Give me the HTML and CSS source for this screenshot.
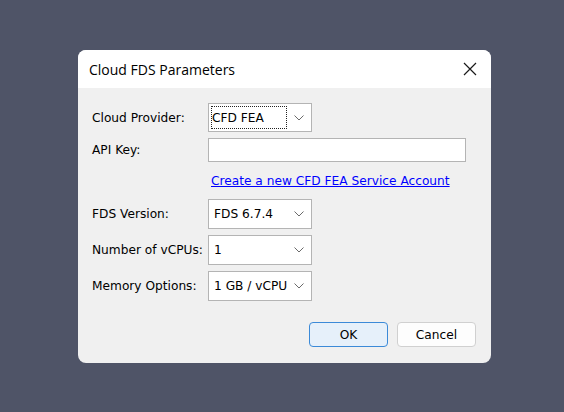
FILE: index.html
```html
<!DOCTYPE html>
<html>
<head>
<meta charset="utf-8">
<link rel="stylesheet" href="styles.css">
</head>
<body>
<div class="dialog">
  <div class="titlebar">
    <span class="title">Cloud FDS Parameters</span>
    <span class="close">
      <svg width="14" height="14" viewBox="0 0 14 14"><path d="M1 1 L13 13 M13 1 L1 13" stroke="#1a1a1a" stroke-width="1.2" fill="none"/></svg>
    </span>
  </div>
  <div class="content">
    <div class="form">
      <label class="lbl">Cloud Provider:</label>
      <div class="combo"><span class="val focus">CFD FEA</span><span class="chev"><svg width="10" height="6" viewBox="0 0 10 6"><path d="M0.5 0.5 L5 5 L9.5 0.5" stroke="#6a6a6a" stroke-width="1" fill="none"/></svg></span></div>
      <label class="lbl">API Key:</label>
      <div class="input"></div>
      <span></span>
      <div class="linkrow"><a class="link" href="#">Create a new CFD FEA Service Account</a></div>
      <label class="lbl">FDS Version:</label>
      <div class="combo"><span class="val">FDS 6.7.4</span><span class="chev"><svg width="10" height="6" viewBox="0 0 10 6"><path d="M0.5 0.5 L5 5 L9.5 0.5" stroke="#6a6a6a" stroke-width="1" fill="none"/></svg></span></div>
      <label class="lbl">Number of vCPUs:</label>
      <div class="combo"><span class="val">1</span><span class="chev"><svg width="10" height="6" viewBox="0 0 10 6"><path d="M0.5 0.5 L5 5 L9.5 0.5" stroke="#6a6a6a" stroke-width="1" fill="none"/></svg></span></div>
      <label class="lbl">Memory Options:</label>
      <div class="combo"><span class="val">1 GB / vCPU</span><span class="chev"><svg width="10" height="6" viewBox="0 0 10 6"><path d="M0.5 0.5 L5 5 L9.5 0.5" stroke="#6a6a6a" stroke-width="1" fill="none"/></svg></span></div>
    </div>
    <div class="buttons">
      <button class="btn primary">OK</button>
      <button class="btn">Cancel</button>
    </div>
  </div>
</div>
</body>
</html>
```
FILE: styles.css
```css
html, body {
  margin: 0;
  padding: 0;
}
body {
  width: 564px;
  height: 412px;
  background: #4f5467;
  overflow: hidden;
  font-family: "DejaVu Sans", Tahoma, sans-serif;
  font-size: 12.2px;
  color: #000;
}
.dialog {
  width: 413px;
  height: 313px;
  margin: 50px 0 0 78px;
  background: #f0f0f0;
  border-radius: 8px;
  overflow: hidden;
  display: flex;
  flex-direction: column;
}
.titlebar {
  height: 38px;
  background: #ffffff;
  display: flex;
  align-items: center;
  justify-content: space-between;
  padding: 0 14px 0 11px;
}
.title {
  font-family: "Open Sans", "Noto Sans", sans-serif;
  font-size: 14px;
  color: #000;
}
.close {
  display: flex;
  align-items: center;
}
.content {
  padding: 15px 15px 0 14px;
  display: flex;
  flex-direction: column;
}
.form {
  display: grid;
  grid-template-columns: 116px auto;
  grid-template-rows: 29px 24px 25px 30px 30px 30px;
  row-gap: 6px;
  justify-items: start;
}
.lbl {
  align-self: center;
}
.combo {
  width: 104px;
  box-sizing: border-box;
  height: 100%;
  background: #fff;
  border: 1px solid #b4b4b4;
  display: flex;
  align-items: center;
  justify-content: space-between;
  padding: 0 7px 0 4px;
}
.val {
  padding: 0 1px;
}
.val.focus {
  border: 1px dotted #222;
  height: 23px;
  width: 76px;
  box-sizing: border-box;
  display: flex;
  align-items: center;
  padding: 0;
  margin-left: -2px;
}
.chev {
  display: flex;
  align-items: center;
}
.input {
  width: 258px;
  box-sizing: border-box;
  height: 100%;
  background: #fff;
  border: 1px solid #b4b4b4;
}
.linkrow {
  align-self: center;
  padding-left: 3px;
  padding-top: 1px;
}
.link {
  color: #0000ff;
  text-decoration: underline;
}
.buttons {
  display: flex;
  justify-content: flex-end;
  gap: 9px;
  margin-top: 21px;
}
.btn {
  width: 79px;
  height: 25px;
  box-sizing: border-box;
  font-family: "DejaVu Sans", Tahoma, sans-serif;
  font-size: 12.2px;
  color: #000;
  background: #fdfdfd;
  border: 1px solid #d0d0d0;
  border-radius: 4px;
  padding: 0;
}
.btn.primary {
  background: #e6f0fa;
  border: 1px solid #3b8ad8;
}
```
